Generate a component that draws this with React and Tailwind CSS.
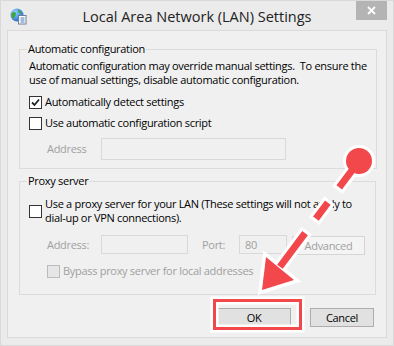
import React from 'react';

const font = { fontFamily: '"Open Sans", "Noto Sans", sans-serif' };

function Check({ checked, disabled }) {
  return (
    <span
      className={`w-[13px] h-[13px] shrink-0 border flex items-center justify-center ${
        disabled ? 'border-[#bcbcbc] bg-[#e6e6e6]' : 'border-[#333] bg-white'
      }`}
    >
      {checked && (
        <svg width="9" height="9" viewBox="0 0 9 9">
          <path d="M1 4.5 L3.5 7 L8 1.5" fill="none" stroke="#222" strokeWidth="1.8" />
        </svg>
      )}
    </span>
  );
}

function GlobeIcon() {
  return (
    <svg width="17" height="17" viewBox="0 0 17 17">
      <defs>
        <radialGradient id="g" cx="0.35" cy="0.3" r="0.8">
          <stop offset="0" stopColor="#8fd3ff" />
          <stop offset="1" stopColor="#1f62c9" />
        </radialGradient>
      </defs>
      <circle cx="7" cy="7" r="6.5" fill="url(#g)" />
      <path d="M2 5 C4 3 6 4 6 6 C6 8 4 9 3 11 C1.5 9 1 7 2 5 Z" fill="#3fa63a" />
      <path d="M8 2 C10 2 12 4 11 6 C10 5 8 5 8 2 Z" fill="#3fa63a" />
      <rect x="8.5" y="7.5" width="7.5" height="8.5" fill="#fff" stroke="#6a7f9a" />
      <path d="M10.5 10 H14.5 M10.5 12 H14.5 M10.5 14 H14.5" stroke="#4a78b5" strokeWidth="1" />
      <path d="M9.7 10 H10 M9.7 12 H10" stroke="#4a78b5" />
    </svg>
  );
}

function Btn({ children, className = '', disabled }) {
  return (
    <div
      className={`h-[19px] border flex items-center justify-center shrink-0 ${
        disabled ? 'border-[#d5d5d5] bg-[#f4f4f4] text-[#a0a0a0]' : 'border-[#adadad] bg-[#e1e1e1] text-black'
      } ${className}`}
    >
      {children}
    </div>
  );
}

const P0 = [358, 160];
const DIR = [-0.599, 0.801];
const pt = (t) => [P0[0] + DIR[0] * t, P0[1] + DIR[1] * t];
const redSegs = [[0, 33], [52, 72], [90, 132]];
const whiteSegs = [[0, 36], [49, 75], [87, 132]];

function Annotation() {
  return (
    <svg className="absolute inset-0 pointer-events-none" width="394" height="346" viewBox="0 0 394 346">
      <rect x="213.5" y="299.5" width="86" height="28" fill="none" stroke="#fff" strokeWidth="8" />
      {whiteSegs.map(([a, b]) => {
        const [x1, y1] = pt(a);
        const [x2, y2] = pt(b);
        return <line key={a} x1={x1} y1={y1} x2={x2} y2={y2} stroke="#fff" strokeWidth="13" />;
      })}
      <circle cx="358" cy="160" r="16" fill="#fff" />
      <polygon points="265,256 293,279 261,289" fill="#fff" stroke="#fff" strokeWidth="7" strokeLinejoin="miter" />
      {redSegs.map(([a, b]) => {
        const [x1, y1] = pt(a);
        const [x2, y2] = pt(b);
        return <line key={a} x1={x1} y1={y1} x2={x2} y2={y2} stroke="#f2474b" strokeWidth="7" />;
      })}
      <circle cx="358" cy="160" r="13" fill="#f2474b" />
      <polygon points="265,256 293,279 261,289" fill="#f2474b" />
      <rect x="213.5" y="299.5" width="86" height="28" fill="none" stroke="#f2474b" strokeWidth="3" />
    </svg>
  );
}

export default function App() {
  return (
    <div className="relative w-[394px] h-[346px] bg-[#ebebeb] flex flex-col overflow-hidden border border-[#d9d9d9]" style={font}>
      {/* Title bar */}
      <div className="h-[29px] shrink-0 flex items-start relative">
        <div className="pl-[9px] pt-[7px] w-[40px]">
          <GlobeIcon />
        </div>
        <div className="flex-1 text-center text-[14.5px] text-[#222] pt-[5px] whitespace-nowrap">
          Local Area Network (LAN) Settings
        </div>
        <div className="w-[31px] h-[19px] bg-[#b4b4b4] mr-[6px] ml-[3px] flex items-center justify-center">
          <svg width="9" height="9" viewBox="0 0 9 9">
            <path d="M1 1 L8 8 M8 1 L1 8" stroke="#fff" strokeWidth="1.8" />
          </svg>
        </div>
      </div>

      {/* Content */}
      <div className="flex-1 mx-[6px] mb-[7px] border border-[#dadada] bg-[#f0f0f0] text-[11px] tracking-[-0.3px] text-black leading-[14px] flex flex-col whitespace-nowrap">
        <fieldset className="mt-[11px] ml-[11px] mr-[10px] border border-[#dcdcdc] px-[9px] pb-[8px]">
          <legend className="-ml-[2px] px-[1px]">Automatic configuration</legend>
          <p className="mt-[3px]">
            Automatic configuration may override manual settings.&nbsp; To ensure the
            <br />
            use of manual settings, disable automatic configuration.
          </p>
          <div className="flex items-center gap-[3px] mt-[8px]">
            <Check checked />
            <span>Automatically detect settings</span>
          </div>
          <div className="flex items-center gap-[3px] mt-[7px]">
            <Check />
            <span>Use automatic configuration script</span>
          </div>
          <div className="flex items-center mt-[8px] pl-[18px]">
            <span className="w-[54px] text-[#a0a0a0]">Address</span>
            <div className="w-[185px] h-[22px] border border-[#d9d9d9] bg-[#f0f0f0]" />
          </div>
        </fieldset>

        <fieldset className="mt-[5px] ml-[11px] mr-[10px] border border-[#dcdcdc] px-[9px] pb-[16px]">
          <legend className="-ml-[2px] px-[1px]">Proxy server</legend>
          <div className="flex items-center gap-[3px] mt-[9px]">
            <Check />
            <span>
              Use a proxy server for your LAN (These settings will not apply to
              <br />
              dial-up or VPN connections).
            </span>
          </div>
          <div className="flex items-center mt-[9px] pl-[18px] text-[#a0a0a0]">
            <span className="w-[54px]">Address:</span>
            <div className="w-[87px] h-[19px] border border-[#d9d9d9] bg-[#f0f0f0]" />
            <span className="ml-[14px] w-[37px]">Port:</span>
            <div className="w-[48px] h-[19px] border border-[#d9d9d9] bg-[#f0f0f0] pl-[5px] flex items-center">80</div>
            <Btn disabled className="ml-[5px] w-[73px] mt-[2px]">Advanced</Btn>
          </div>
          <div className="flex items-center gap-[3px] mt-[9px] pl-[18px] text-[#a0a0a0]">
            <Check disabled />
            <span>Bypass proxy server for local addresses</span>
          </div>
        </fieldset>

        <div className="flex justify-end gap-[19px] mt-[13px] mr-[12px]">
          <Btn className="w-[74px]">OK</Btn>
          <Btn className="w-[64px]">Cancel</Btn>
        </div>
      </div>

      <Annotation />
    </div>
  );
}
